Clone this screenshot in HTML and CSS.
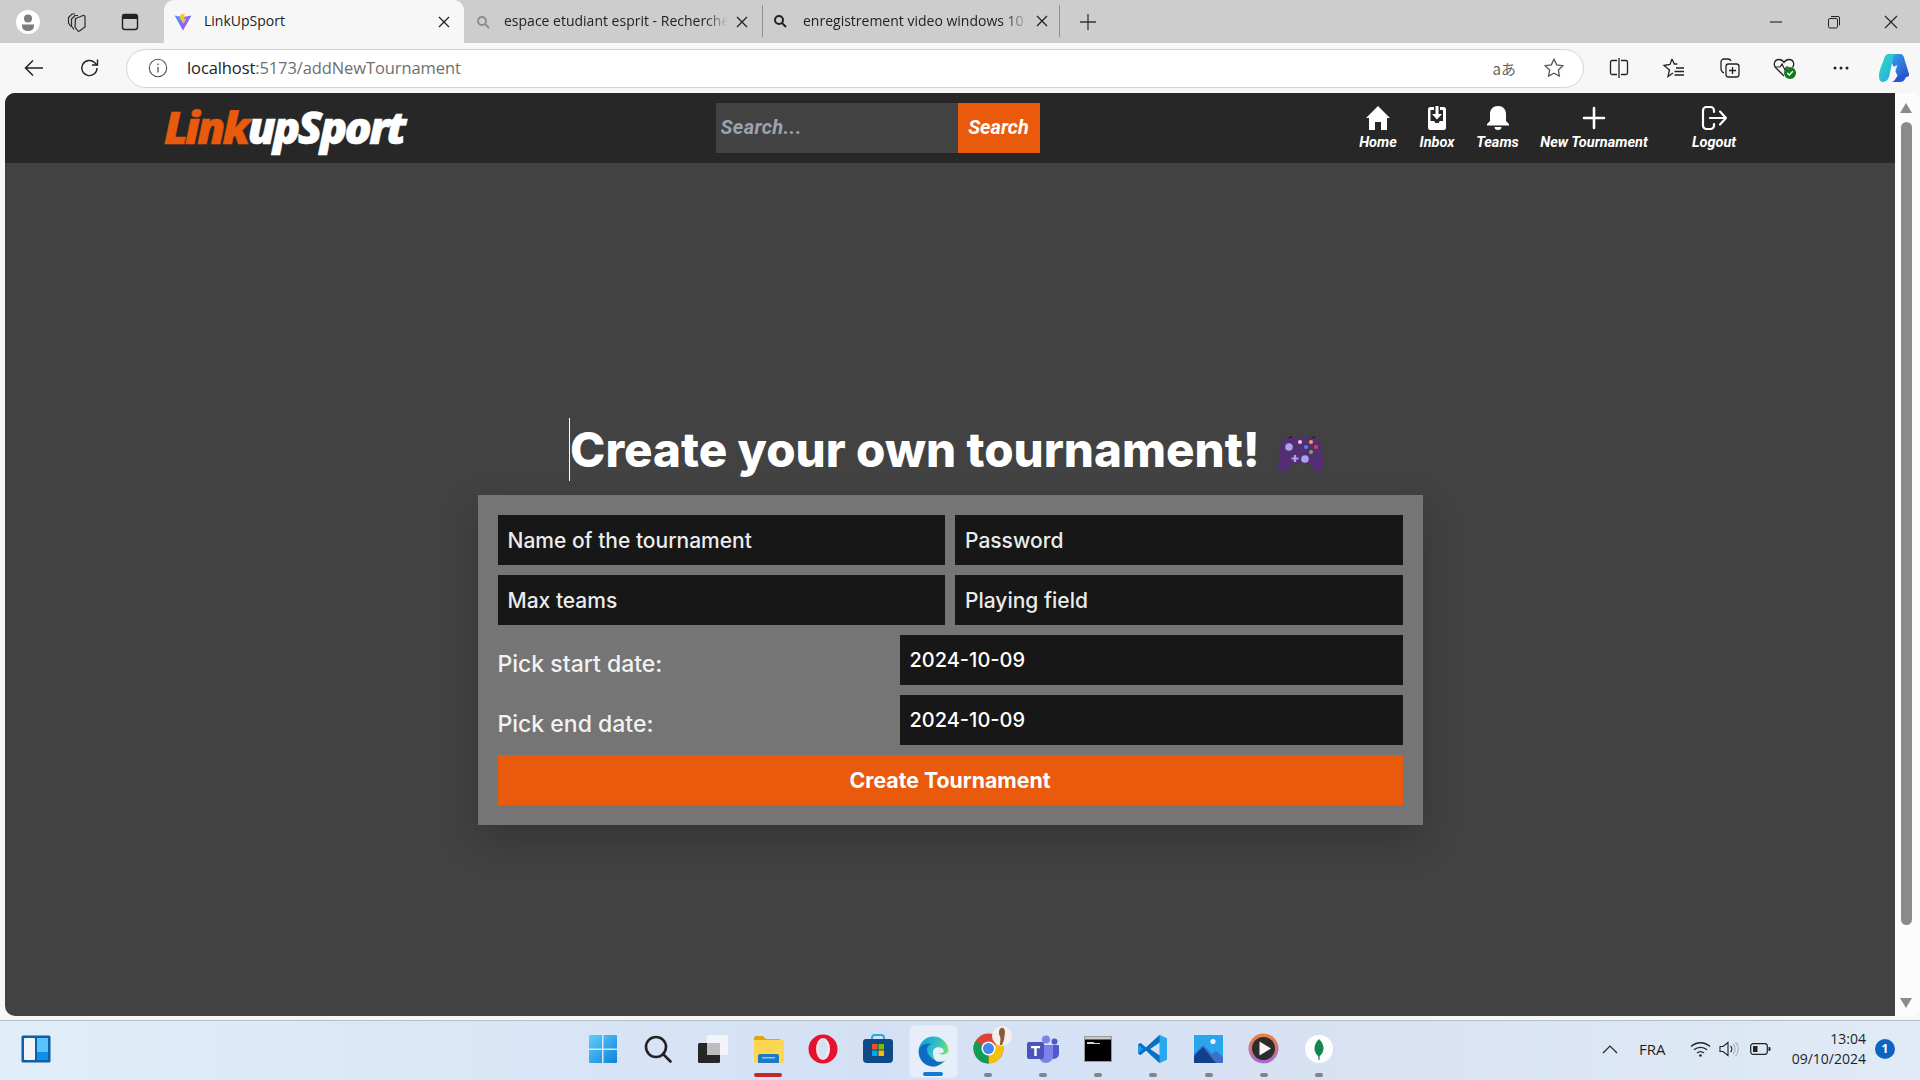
FILE: index.html
```html
<!DOCTYPE html>
<html lang="en">
<head>
<meta charset="utf-8">
<title>LinkUpSport</title>
<link rel="stylesheet" href="styles.css">
</head>
<body>
<div class="tabstrip">
  <div class="strip-left">
    <span class="profile"><svg width="24" height="24" viewBox="0 0 24 24"><circle cx="12" cy="12" r="12" fill="#fff"/><circle cx="12" cy="8.5" r="4" fill="#7d7d7d"/><path d="M6 14.5h12v1.5a5 5 0 0 1-5 5h-2a5 5 0 0 1-5-5z" fill="#7d7d7d"/></svg></span>
    <span class="strip-btn"><svg width="22" height="22" viewBox="0 0 22 22" fill="none" stroke="#2b2b2b" stroke-width="1.2"><path d="M5 15.500 2.500 12V6.500L6 3h3"/><path d="M8 18.500 5.500 15V8L9 4.500h3"/><path d="M9.500 7.500 17 4.500a1.500 1.500 0 0 1 2 1.500v10l-5.500 4a1.500 1.500 0 0 1-2-.5L9 16z"/></svg></span>
    <span class="strip-btn"><svg width="20" height="20" viewBox="0 0 20 20" fill="none"><rect x="2.5" y="2.5" width="15" height="15" rx="2.5" stroke="#222" stroke-width="1.4"/><rect x="2.5" y="2.5" width="15" height="4.5" fill="#222"/></svg></span>
  </div>
  <div class="tab tab-active">
    <span class="tab-icon"><svg width="18" height="18" viewBox="0 0 18 18"><defs><linearGradient id="vite" x1="0" y1="0" x2="1" y2="1"><stop offset="0" stop-color="#41a5ff"/><stop offset="1" stop-color="#bd34fe"/></linearGradient></defs><path d="M0.5 2.5 9 17.5 17.5 2.5 9 4z" fill="url(#vite)"/><path d="M10.5 0.5 6.5 1.5 6.2 7 8 6.7 7.8 9.5 9.3 8.9 9.2 11.5 12.4 5.5 10.2 6z" fill="#ffc517"/></svg></span>
    <span class="tab-title">LinkUpSport</span>
    <span class="tab-close"><svg width="12" height="12" viewBox="0 0 12 12"><path d="M1 1l10 10M11 1 1 11" stroke="#222" stroke-width="1.3"/></svg></span>
  </div>
  <div class="tab">
    <span class="tab-icon"><svg width="14" height="14" viewBox="0 0 14 14" fill="none" stroke="#8a8a8a" stroke-width="1.8"><circle cx="6" cy="6" r="4"/><path d="M9 9l4 4"/></svg></span>
    <span class="tab-title fade">espace etudiant esprit - Recherche</span>
    <span class="tab-close"><svg width="12" height="12" viewBox="0 0 12 12"><path d="M1 1l10 10M11 1 1 11" stroke="#222" stroke-width="1.3"/></svg></span>
  </div>
  <div class="tab tab-sep">
    <span class="tab-icon"><svg width="14" height="14" viewBox="0 0 14 14" fill="none" stroke="#222" stroke-width="2"><circle cx="6" cy="6" r="4"/><path d="M9 9l4 4"/></svg></span>
    <span class="tab-title fade">enregistrement video windows 10 - Recherche</span>
    <span class="tab-close"><svg width="12" height="12" viewBox="0 0 12 12"><path d="M1 1l10 10M11 1 1 11" stroke="#222" stroke-width="1.3"/></svg></span>
  </div>
  <span class="newtab"><svg width="18" height="18" viewBox="0 0 18 18"><path d="M9 1v16M1 9h16" stroke="#333" stroke-width="1.3"/></svg></span>
  <div class="winctl">
    <span class="winbtn"><svg width="14" height="14" viewBox="0 0 14 14"><path d="M1 7h12" stroke="#222" stroke-width="1.1"/></svg></span>
    <span class="winbtn"><svg width="14" height="14" viewBox="0 0 14 14" fill="none" stroke="#222" stroke-width="1"><rect x="1.5" y="3.5" width="9" height="9.5" rx="1.5"/><path d="M4 1.5h7a1.5 1.5 0 0 1 1.5 1.5v7.5"/></svg></span>
    <span class="winbtn"><svg width="14" height="14" viewBox="0 0 14 14"><path d="M1 1l12 12M13 1 1 13" stroke="#222" stroke-width="1.1"/></svg></span>
  </div>
</div>

<div class="toolbar">
  <div class="tool-left">
    <span class="tool-btn"><svg width="22" height="22" viewBox="0 0 22 22" fill="none" stroke="#222" stroke-width="1.5"><path d="M20 11H3M10 3.5 2.5 11l7.5 7.5"/></svg></span>
    <span class="tool-btn"><svg width="22" height="22" viewBox="0 0 22 22" fill="none" stroke="#222" stroke-width="1.4"><path d="M18 11a7.6 7.6 0 1 1-2.4-5.5L18 8"/><path d="M18.5 2.5V8h-5.5"/></svg></span>
  </div>
  <div class="omnibox">
    <span class="info"><svg width="20" height="20" viewBox="0 0 20 20" fill="none" stroke="#555" stroke-width="1.1"><circle cx="10" cy="10" r="8.7"/><path d="M10 9v5.5M10 5.5v1.7" stroke-width="1.3"/></svg></span>
    <span class="url"><span class="url-host">localhost</span>:5173/addNewTournament</span>
    <span class="omni-right">
      <span class="translate">aあ</span>
      <svg width="22" height="22" viewBox="0 0 22 22" fill="none" stroke="#555" stroke-width="1.3"><path d="M11 2.2l2.7 5.6 6.1.9-4.4 4.3 1 6.1-5.4-2.9-5.4 2.9 1-6.1-4.4-4.3 6.1-.9z"/></svg>
    </span>
  </div>
  <div class="tool-right">
    <span class="tool-item"><svg width="22" height="22" viewBox="0 0 22 22" fill="none" stroke="#222" stroke-width="1.3"><path d="M9 3.5H4a1.5 1.5 0 0 0-1.500 1.500v11A1.500 1.500 0 0 0 4 17.500h5M13 3.500h5A1.500 1.500 0 0 1 19.500 5v11a1.500 1.500 0 0 1-1.500 1.500h-5M11 1v20"/></svg></span>
    <span class="tool-item"><svg width="24" height="22" viewBox="0 0 24 22" fill="none" stroke="#222" stroke-width="1.3"><path d="M10 2l2.300 5h3M11 16l-5 3.500 1.500-6.500L2 8.500 8 7.500 10 2"/><path d="M14 11h8M12.500 14.500H22M12.500 18H22" stroke-width="1.4"/></svg></span>
    <span class="tool-item"><svg width="22" height="22" viewBox="0 0 22 22" fill="none" stroke="#222" stroke-width="1.3"><path d="M5 16C3 15 2 13.500 2 12V5a3 3 0 0 1 3-3h4c1.500 0 2.500.8 3 2"/><rect x="7" y="7" width="13" height="13" rx="2.500"/><path d="M13.500 10v7M10 13.500h7"/></svg></span>
    <span class="tool-item"><svg width="26" height="24" viewBox="0 0 26 24" fill="none"><path d="M12 20 3.500 11.500C1 8.500 2.500 3.500 7 3.500c2.500 0 4 1.500 5 3 1-1.500 2.500-3 5-3 4.500 0 6 5 3.500 8" stroke="#222" stroke-width="1.3"/><path d="M3 11h5l2-3 3 6 1.500-3h2" stroke="#222" stroke-width="1.2"/><circle cx="18" cy="17" r="6" fill="#127c1c"/><path d="M15.300 17l2 2 3.500-3.800" stroke="#fff" stroke-width="1.4"/></svg></span>
    <span class="tool-item"><svg width="18" height="6" viewBox="0 0 18 6" fill="#222"><circle cx="3" cy="3" r="1.500"/><circle cx="9" cy="3" r="1.500"/><circle cx="15" cy="3" r="1.500"/></svg></span>
    <span class="copilot"><svg width="30" height="30" viewBox="0 0 30 30"><defs><linearGradient id="cpa" x1="0" y1="0" x2="1" y2="1"><stop offset="0" stop-color="#2ee0b8"/><stop offset="1" stop-color="#27a0f0"/></linearGradient><linearGradient id="cpb" x1="0" y1="0" x2="1" y2="1"><stop offset="0" stop-color="#38a7ee"/><stop offset="1" stop-color="#2a4fc8"/></linearGradient></defs><path d="M9 1h12c2 0 3 .8 3.800 3L30 21c.6 2-1 3-3 3H19z" fill="url(#cpb)"/><path d="M5 6c.5-3 2-5 5-5h8c-2 0-3.200 1.200-3.800 3.500L10.500 22c-.6 3-2.500 7-6.500 7C1 29 0 26 0 23c0-6 3-11 5-17z" fill="url(#cpa)"/><path d="M12 29h9c3 0 5-2 6-5l1-3-7 1c-2 .3-3 1.500-4 3-1 2-2.500 4-5 4z" fill="#2557d6"/><path d="M13.500 14l5-2-2 6-5 2z" fill="#fff" opacity=".85"/></svg></span>
  </div>
</div>

<div class="viewport">
  <div class="page">
    <nav class="nav">
      <a class="logo"><span class="logo-orange">Link</span>upSport</a>
      <form class="search">
        <input class="search-input" type="text" placeholder="Search...">
        <button class="search-btn" type="button">Search</button>
      </form>
      <div class="links">
        <a class="link link-home"><svg width="26" height="26" viewBox="0 0 26 26" fill="#fff"><path d="M13 1 25 13h-3v12h-6v-8h-6v8H4V13H1z"/></svg><span>Home</span></a>
        <a class="link link-inbox"><svg width="26" height="26" viewBox="0 0 26 26"><path d="M6.500 2H10v3H6.500v11h3.800l1 2h3.400l1-2h3.300V5H16V2h3.500A2.500 2.500 0 0 1 22 4.500v18a2.500 2.500 0 0 1-2.500 2.500h-13A2.500 2.500 0 0 1 4 22.500v-18A2.500 2.500 0 0 1 6.500 2z" fill="#fff"/><path d="M11.500 1h3v8h3.500L13 14.500 8 9h3.500z" fill="#fff"/></svg><span>Inbox</span></a>
        <a class="link link-teams"><svg width="26" height="26" viewBox="0 0 26 26" fill="#fff"><path d="M13 1c5 0 8 3.500 8 8v7l3 3v1.500H2V19l3-3V9c0-4.500 3-8 8-8z"/><path d="M9.500 22h7a3.500 3 0 0 1-7 0z"/></svg><span>Teams</span></a>
        <a class="link link-new"><svg width="26" height="26" viewBox="0 0 26 26"><path d="M13 3v20M3 13h20" stroke="#fff" stroke-width="2.600" stroke-linecap="round"/></svg><span>New Tournament</span></a>
        <a class="link link-logout"><svg width="28" height="26" viewBox="0 0 28 26" fill="none" stroke="#fff" stroke-width="2.200" stroke-linecap="round" stroke-linejoin="round"><path d="M14 7V5.500A3.500 3.500 0 0 0 10.500 2h-4A3.500 3.500 0 0 0 3 5.500v15A3.500 3.500 0 0 0 6.500 24h4a3.500 3.500 0 0 0 3.500-3.500V19"/><path d="M10 13h16M20 6.500l6 6.500-6 6.500"/></svg><span>Logout</span></a>
      </div>
    </nav>
    <main class="main">
      <h1 class="title"><span class="title-text">Create your own tournament!</span>
        <svg class="pad" width="46" height="38" viewBox="0 0 46 38"><path d="M10 3h26c4 0 6 3 7 7l3 20c.4 4-2 7-5 7-3 .2-5-2-7-5l-3-3H15l-3 3c-2 3-4 5.200-7 5C2 37-.4 34 0 30l3-20c1-4 3-7 7-7z" fill="#532e73"/><path d="M9 3l5-2v2zM32 3l5-2v2z" fill="#1d1d1d"/><circle cx="11" cy="12" r="3.800" fill="#a9a4e6"/><circle cx="27" cy="24" r="3.800" fill="#a9a4e6"/><path d="M17 20v7M13.500 23.500h7" stroke="#a9a4e6" stroke-width="2.200"/><circle cx="22" cy="7" r="2" fill="#d9d0ea"/><circle cx="33" cy="7" r="2" fill="#f0a53b"/><circle cx="28" cy="12" r="2" fill="#3b8fe6"/><circle cx="38" cy="12" r="2" fill="#e63b4c"/><circle cx="33" cy="17" r="2" fill="#6fb04a"/></svg>
      </h1>
      <form class="card">
        <div class="pair">
          <input class="field" type="text" placeholder="Name of the tournament">
          <input class="field" type="text" placeholder="Password">
        </div>
        <div class="pair">
          <input class="field" type="text" placeholder="Max teams">
          <input class="field" type="text" placeholder="Playing field">
        </div>
        <label class="date-row"><span class="date-label">Pick start date:</span><input class="field date-field" type="text" value="2024-10-09"></label>
        <label class="date-row"><span class="date-label">Pick end date:</span><input class="field date-field" type="text" value="2024-10-09"></label>
        <button class="create" type="button">Create Tournament</button>
      </form>
    </main>
  </div>
  <div class="scrollbar">
    <span class="arrow-up"></span>
    <span class="thumb"></span>
    <span class="arrow-down"></span>
  </div>
</div>

<footer class="taskbar">
  <div class="task-left"><svg width="30" height="28" viewBox="0 0 30 28"><rect x="0.500" y="0.500" width="29" height="27" rx="1.500" fill="#0f5fa8"/><rect x="3" y="3" width="11" height="22" rx="1" fill="#f1f4f8"/><rect x="16" y="3" width="11" height="14" fill="#58c4ff"/><rect x="16" y="17" width="11" height="8" fill="#0d8fe8"/></svg></div>
  <div class="task-center">
    <span class="task-item"><svg width="30" height="30" viewBox="0 0 30 30"><defs><linearGradient id="win" x1="0" y1="0" x2="1" y2="1"><stop offset="0" stop-color="#5ed0f8"/><stop offset="1" stop-color="#0f7fdc"/></linearGradient></defs><path d="M2 1h12v13.500H1V2a1 1 0 0 1 1-1zM15.500 1H28a1 1 0 0 1 1 1v12.500H15.500zM1 16h13v13H2a1 1 0 0 1-1-1zM15.500 16H29v12a1 1 0 0 1-1 1H15.500z" fill="url(#win)"/></svg></span>
    <span class="task-item"><svg width="28" height="28" viewBox="0 0 28 28" fill="none" stroke="#222" stroke-width="2.600"><circle cx="12" cy="12" r="10"/><path d="M19 19l7.500 7.500" stroke-linecap="round"/></svg></span>
    <span class="task-item"><svg width="30" height="28" viewBox="0 0 30 28"><rect x="9" y="0" width="21" height="20" rx="2" fill="#f2f4f7"/><rect x="0" y="8" width="22" height="20" rx="1.500" fill="#262626"/><rect x="9" y="8" width="13" height="12" fill="#bdbdbd"/></svg></span>
    <span class="task-item marked"><svg width="31" height="28" viewBox="0 0 31 28"><path d="M1 3a2 2 0 0 1 2-2h7l3 3h13a2 2 0 0 1 2 2v3H1z" fill="#e0a60a"/><path d="M1 5h29a1 1 0 0 1 1 1v20a2 2 0 0 1-2 2H3a2 2 0 0 1-2-2z" fill="#fdd751"/><path d="M5 21a2 2 0 0 1 2-2h17a2 2 0 0 1 2 2v7H5z" fill="#1d78c9"/><rect x="9" y="22" width="13" height="1.500" fill="#8cc6f0"/></svg><i class="run run-red"></i></span>
    <span class="task-item"><svg width="30" height="30" viewBox="0 0 30 30"><circle cx="15" cy="15" r="14.500" fill="#e8112d"/><ellipse cx="15" cy="15" rx="7" ry="11" fill="#f7e9ee"/><ellipse cx="15" cy="15" rx="4.500" ry="10" fill="#d5e2f5"/></svg></span>
    <span class="task-item"><svg width="30" height="30" viewBox="0 0 30 30"><path d="M9 7V4a3 3 0 0 1 3-3h6a3 3 0 0 1 3 3v3" fill="none" stroke="#28a8e8" stroke-width="2"/><path d="M0 8a3 3 0 0 1 3-3h24a3 3 0 0 1 3 3v17a4 4 0 0 1-4 4H4a4 4 0 0 1-4-4z" fill="#0f4a86"/><rect x="9" y="10" width="5.500" height="5.500" fill="#f25022"/><rect x="15.500" y="10" width="5.500" height="5.500" fill="#7fba00"/><rect x="9" y="16.500" width="5.500" height="5.500" fill="#00a4ef"/><rect x="15.500" y="16.500" width="5.500" height="5.500" fill="#ffb900"/></svg></span>
    <span class="task-item active"><svg width="31" height="31" viewBox="0 0 31 31"><defs><linearGradient id="edh" x1="0" y1="0" x2="1" y2="0.500"><stop offset="0" stop-color="#1496dc"/><stop offset="0.550" stop-color="#2dbfc8"/><stop offset="1" stop-color="#7fe06a"/></linearGradient></defs><circle cx="15.500" cy="15.500" r="15" fill="url(#edh)"/><path d="M1 15C1.500 9 8 6 13.500 8 9 9.500 8 13.500 10 17.500c2.500 5 8 8.500 16 7.500-3 3.500-7 5.500-10.500 5.500C7 30.500.5 24 1 15z" fill="#0e6cc4"/><path d="M15 17c-.5-4 3-6.500 7-5.500 3 .7 4.500 2.500 3.500 4.500-1 1.500-3.500 1.500-5 .8 3 3 7.500 2 10-1.500 0 4-1 7-3 9-3.500 1.700-6.500 2-9 1-2.500-1.500-3.200-5-3.500-8.300z" fill="#e6f0fb"/></svg><i class="run run-blue"></i></span>
    <span class="task-item"><span class="chrome-wrap"><svg width="31" height="31" viewBox="0 0 31 31"><circle cx="15.500" cy="15.500" r="15" fill="#db4437"/><path d="M15.500 15.500 28.500 8a15 15 0 0 1-13 22.500z" fill="#f4c20d"/><path d="M15.500 15.500 15.500 30.500A15 15 0 0 1 2.500 8z" fill="#0f9d58"/><circle cx="15.500" cy="15.500" r="7" fill="#fff"/><circle cx="15.500" cy="15.500" r="5.500" fill="#4285f4"/></svg><svg class="avatar" width="20" height="20" viewBox="0 0 20 20"><circle cx="10" cy="10" r="10" fill="#f2efec"/><path d="M9 2c2-1 4 1 4 4l-1 8-2 5H8l.5-7L7 8c0-3 0-5 2-6z" fill="#8a5a3c"/></svg></span><i class="run"></i></span>
    <span class="task-item"><svg width="32" height="28" viewBox="0 0 32 28"><circle cx="19" cy="4.500" r="4" fill="#7b83eb"/><circle cx="27.500" cy="6.500" r="3" fill="#5059c9"/><path d="M23 10h8a1 1 0 0 1 1 1v8a5 5 0 0 1-7 4.500z" fill="#5059c9"/><path d="M11 10h15v11a7 7 0 0 1-14 0z" fill="#7b83eb"/><rect x="0" y="7" width="17" height="17" rx="2" fill="#4b53bc"/><path d="M4 11h9v2.200h-3.300V21H7.300v-7.800H4z" fill="#fff"/></svg><i class="run"></i></span>
    <span class="task-item"><svg width="28" height="26" viewBox="0 0 28 26"><rect x="0.500" y="0.500" width="27" height="25" fill="#000" stroke="#9a9a9a"/><rect x="1" y="1" width="26" height="2.500" fill="#c9c9c9"/><rect x="3" y="6" width="7" height="2" fill="#cfcfcf"/><rect x="10" y="7" width="6" height="1" fill="#cfcfcf"/></svg><i class="run"></i></span>
    <span class="task-item"><svg width="30" height="30" viewBox="0 0 30 30"><path d="M21.500 1 29 4.500v21L21.500 29 8 16.500 2.500 21 0 19.500V10.500L2.500 9 8 13.500z" fill="#1e9ce8"/><path d="M21.500 1 29 4.500v21L21.500 29z" fill="#29a8ef"/><path d="M21.500 8.500 12 15l9.500 6.500z" fill="#d5e2f5"/><path d="M21.500 1 8 13.500 2.500 9 0 10.500 5 15 0 19.500 2.500 21 8 16.500 21.500 29V21.500L12 15l9.500-6.500z" fill="#0a70c0"/></svg><i class="run"></i></span>
    <span class="task-item"><svg width="29" height="28" viewBox="0 0 29 28"><rect width="29" height="28" fill="#2aa5ec"/><circle cx="19" cy="6.500" r="2.600" fill="#eaf6ff"/><path d="M0 28V19l9-9 9 9 4-3 7 6v6z" fill="#3d6fc8"/><path d="M0 28v-7l9-9 13 16z" fill="#11408c"/></svg><i class="run"></i></span>
    <span class="task-item"><svg width="31" height="31" viewBox="0 0 31 31"><defs><linearGradient id="mpl" x1="0" y1="0" x2="0" y2="1"><stop offset="0" stop-color="#f08030"/><stop offset="1" stop-color="#a868d8"/></linearGradient></defs><circle cx="15.500" cy="15.500" r="15" fill="url(#mpl)"/><circle cx="15.500" cy="15.500" r="11.500" fill="#2c2c2c"/><path d="M11.500 8.500 23 15.500 11.500 22.500z" fill="#f6f6f6"/></svg><i class="run"></i></span>
    <span class="task-item"><svg width="28" height="28" viewBox="0 0 28 28"><circle cx="14" cy="14" r="14" fill="#fdfdfd"/><path d="M14 4c3 3 4.500 6 4.500 9.500 0 3.500-2 6-3.800 7.500L14.500 25h-1l-.3-4C11.500 19.500 9.500 17 9.500 13.500 9.500 10 11 7 14 4z" fill="#13864e"/></svg><i class="run"></i></span>
  </div>
  <div class="tray">
    <svg class="tray-chevron" width="16" height="10" viewBox="0 0 16 10" fill="none" stroke="#222" stroke-width="1.200"><path d="M1 9l7-7 7 7"/></svg>
    <span class="tray-lang">FRA</span>
    <svg class="tray-wifi" width="21" height="16" viewBox="0 0 21 16" fill="none" stroke="#222" stroke-width="1.400"><path d="M1 5.500c5.500-5 13.500-5 19 0M4 8.800c3.800-3.300 9.200-3.300 13 0M7 12c2-1.600 5-1.600 7 0"/><circle cx="10.500" cy="14.500" r="1.300" fill="#222" stroke="none"/></svg>
    <svg class="tray-sound" width="21" height="16" viewBox="0 0 21 16" fill="none" stroke="#222" stroke-width="1.100"><path d="M1 5.500h3L9 1.500v13L4 10.500H1z"/><path d="M11.500 5a4 4 0 0 1 0 6"/><path d="M14 3a7 7 0 0 1 0 10M16.500 1a10 10 0 0 1 0 14" stroke="#a8aeb6"/></svg>
    <svg class="tray-batt" width="21" height="12" viewBox="0 0 21 12" fill="none"><rect x="0.700" y="0.700" width="16.600" height="10.600" rx="2.500" stroke="#222" stroke-width="1.200"/><rect x="3" y="3" width="4.500" height="6" fill="#222"/><path d="M18.500 4h1a1 1 0 0 1 1 1v2a1 1 0 0 1-1 1h-1z" fill="#222"/></svg>
    <div class="clock"><span>13:04</span><span>09/10/2024</span></div>
    <span class="badge">1</span>
  </div>
</footer>
</body>
</html>
```

FILE: styles.css
```css
* { box-sizing: border-box; }
html, body { margin: 0; height: 100%; }
body {
  width: 1920px;
  height: 1080px;
  overflow: hidden;
  display: flex;
  flex-direction: column;
  background: #f7f7f7;
  font-family: "Open Sans", "Noto Sans", sans-serif;
}
svg { display: block; flex: none; }

/* browser tabs */
.tabstrip {
  height: 43px;
  flex: none;
  display: flex;
  background: #cdcdcd;
}
.strip-left { width: 164px; display: flex; align-items: center; padding-left: 16px; }
.profile { width: 24px; height: 24px; margin-right: 26px; }
.strip-btn { width: 22px; display: flex; justify-content: center; margin-right: 31px; }
.strip-btn:last-child { margin-right: 0; }
.tab {
  width: 298px;
  display: flex;
  align-items: center;
  padding-left: 9px;
  font-size: 14px;
  color: #222;
}
.tab-active { width: 300px; background: #f7f7f7; border-radius: 10px 10px 0 0; }
.tab-sep { margin: 5px 0 6px; padding-left: 7px; border-left: 1px solid #8f8f8f; border-right: 1px solid #8f8f8f; }
.tab-icon { width: 20px; display: flex; justify-content: center; margin-right: 11px; }
.tab-sep .tab-icon { margin-right: 13px; }
.tab-title { flex: 1; white-space: nowrap; overflow: hidden; padding-bottom: 2px; }
.fade { -webkit-mask-image: linear-gradient(90deg, #000 90%, transparent); mask-image: linear-gradient(90deg, #000 90%, transparent); }
.tab-close { width: 20px; display: flex; justify-content: center; margin: 0 10px 0 4px; }
.tab-sep .tab-close { margin-right: 7px; }
.newtab { width: 56px; display: flex; align-items: center; justify-content: center; }
.winctl { margin-left: auto; display: flex; }
.winbtn { width: 57.500px; display: flex; align-items: center; justify-content: center; }

/* browser toolbar */
.toolbar { height: 50px; flex: none; display: flex; align-items: center; padding-left: 6px; background: #f7f7f7; }
.tool-left { display: flex; margin-right: 8px; }
.tool-btn { width: 56px; display: flex; justify-content: center; }
.omnibox {
  width: 1458px;
  height: 39px;
  display: flex;
  align-items: center;
  background: #fff;
  border: 1px solid #d4d4d4;
  border-radius: 20px;
  padding: 0 18px 0 21px;
}
.info { margin-right: 19px; }
.url { padding-bottom: 2px; font-size: 16.500px; color: #6f6f6f; letter-spacing: -0.1px; }
.url-host { color: #1d1d1d; }
.omni-right { margin-left: auto; display: flex; align-items: center; gap: 27px; }
.translate { font-size: 15px; color: #666; font-family: "Noto Sans CJK JP", sans-serif; }
.tool-right { display: flex; align-items: center; margin-left: 7px; }
.tool-item { width: 55.500px; display: flex; justify-content: center; }
.copilot { width: 50px; display: flex; justify-content: center; }

/* page viewport */
.viewport { height: 923px; flex: none; display: flex; }
.page {
  flex: 1;
  margin-left: 5px;
  border-radius: 10px 0 0 10px;
  overflow: hidden;
  background: #424242;
  display: flex;
  flex-direction: column;
}
.scrollbar {
  width: 25px;
  flex: none;
  background: #fcfcfc;
  display: flex;
  flex-direction: column;
  align-items: center;
  padding: 10px 3px 8px 0;
  border-radius: 0 8px 8px 0;
}
.arrow-up, .arrow-down { width: 0; height: 0; border-left: 6px solid transparent; border-right: 6px solid transparent; }
.arrow-up { border-bottom: 10px solid #8b8b8b; }
.arrow-down { border-top: 10px solid #8b8b8b; margin-top: auto; }
.thumb { width: 11px; height: 803px; margin-top: 9px; border-radius: 6px; background: #8a8a8a; }

/* site nav */
.nav {
  height: 70px;
  flex: none;
  display: flex;
  align-items: center;
  justify-content: space-between;
  padding: 0 159px;
  background: #272727;
}
.logo {
  width: 232px;
  font-family: "Open Sans", sans-serif;
  font-weight: 800;
  font-style: italic;
  font-size: 45px;
  line-height: 1;
  letter-spacing: -2.600px;
  white-space: nowrap;
  color: #fff;
  -webkit-text-stroke: 0.6px currentColor;
  margin-bottom: 4px;
}
.logo-orange { color: #e95a0c; }
.search { display: flex; height: 50px; }
.search-input {
  width: 242px;
  border: 0;
  padding: 0 5px 3px;
  outline: 0;
  background: #424242;
  color: #fff;
  font: italic 700 20px Roboto, sans-serif;
  letter-spacing: 0.4px;
}
.search-input::placeholder { color: #9ca3af; opacity: 1; }
.search-btn { width: 82px; border: 0; padding: 0 0 3px; background: #e95a0c; color: #fff; font: italic 700 20px Roboto, sans-serif; }
.links { display: flex; gap: 21px; }
.link {
  display: flex;
  flex-direction: column;
  align-items: center;
  gap: 3px;
  color: #fff;
  font: italic 700 14.500px/18px Roboto, sans-serif;
  white-space: nowrap;
}
.link-home { width: 38px; }
.link-inbox { width: 38px; }
.link-teams { width: 41px; }
.link-new { width: 110px; }
.link-logout { width: 44px; margin-left: 22px; }

/* main form */
.main { flex: 1; display: flex; flex-direction: column; align-items: center; padding-top: 255px; }
.title {
  margin: 0 7px 14px 0;
  height: 63px;
  display: flex;
  align-items: center;
  border-left: 1px solid #fff;
  font: 800 47.500px/63px Inter, sans-serif;
  color: #fff;
  white-space: nowrap;
}
.pad { margin: 8px 0 0 18px; }
.card {
  width: 945px;
  height: 330px;
  padding: 20px;
  display: flex;
  flex-direction: column;
  gap: 10px;
  background: #757575;
  box-shadow: 0 15px 35px rgba(0, 0, 0, 0.2);
}
.pair { display: flex; gap: 10px; }
.field {
  flex: 1;
  min-width: 0;
  height: 50px;
  border: 0;
  outline: 0;
  padding: 0 10px;
  background: #171717;
  color: #fff;
  font: 500 21px Inter, sans-serif;
}
.field::placeholder { color: #ececec; opacity: 1; }
.date-row { display: flex; align-items: center; }
.date-label { flex: 1; padding-top: 7px; font: 500 23px Inter, sans-serif; color: #f2f2f2; }
.date-field { flex: none; width: 503px; font-size: 20px; }
.create {
  height: 50px;
  border: 0;
  padding: 0;
  background: #e95a0c;
  color: #fff;
  font: 700 21.300px Inter, sans-serif;
}

/* windows taskbar */
.taskbar {
  flex: 1;
  display: grid;
  grid-template-columns: 575.500px 772px 1fr;
  margin-top: 4px;
  border-top: 1px solid #b9bdc6;
  background: linear-gradient(90deg, #e1edf8 0%, #d4e1f5 45%, #d8e2f3 70%, #e0ebf6 100%);
}
.task-left { display: flex; align-items: center; padding: 0 0 4px 21px; }
.task-center { display: flex; }
.task-item { width: 55.050px; height: 59px; padding-bottom: 4px; position: relative; display: flex; align-items: center; justify-content: center; }
.task-item.active { background: rgba(255, 255, 255, 0.45); border-radius: 5px; margin: 5px 4px 3px; width: 47.050px; height: 51px; padding-bottom: 0; box-shadow: 0 0 0 1px rgba(255, 255, 255, 0.3); }
.run { position: absolute; left: 50%; bottom: 3px; width: 8px; height: 4px; margin-left: -4px; border-radius: 2px; background: #7f8590; }
.run-red { width: 28px; margin-left: -14px; background: #c4262e; }
.run-blue { width: 20px; margin-left: -10px; background: #0f7bd6; bottom: 1px; }
.chrome-wrap { position: relative; }
.avatar { position: absolute; top: -7px; right: -8px; }
.tray { display: flex; align-items: center; padding-bottom: 4px; color: #1f1f1f; }
.tray-chevron { margin-left: 254.500px; }
.tray-lang { margin-left: 21px; width: 34px; font-size: 15px; }
.tray-wifi { margin-left: 17px; }
.tray-sound { margin-left: 8px; }
.tray-batt { margin-left: 10px; }
.clock { margin-left: 19px; width: 76px; display: flex; flex-direction: column; align-items: flex-end; font-size: 14px; line-height: 20px; white-space: nowrap; }
.badge { width: 20px; height: 20px; margin-left: 9px; border-radius: 50%; background: #0f63c0; color: #fff; font-size: 12px; font-weight: 700; text-align: center; line-height: 20px; }
```
